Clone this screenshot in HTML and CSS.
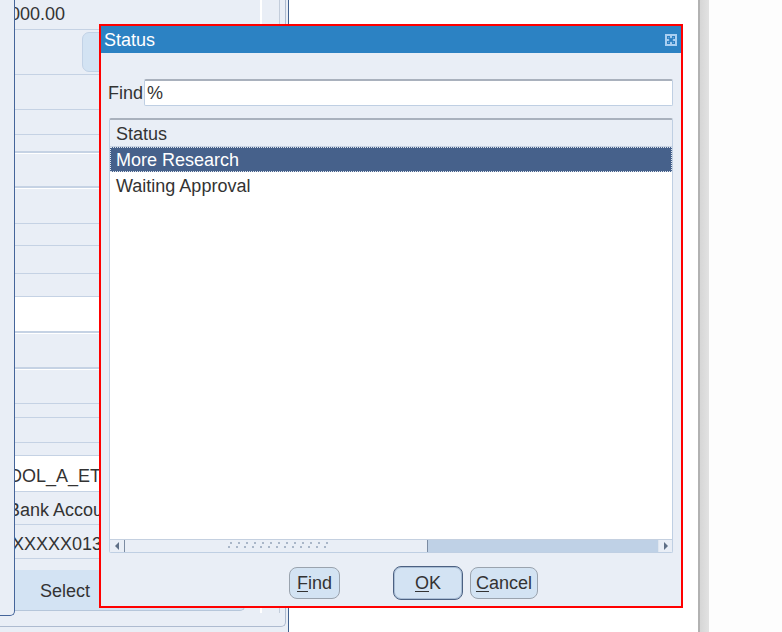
FILE: index.html
```html
<!DOCTYPE html>
<html>
<head>
<meta charset="utf-8">
<link rel="stylesheet" href="styles.css">
</head>
<body>
<div class="page">
  <div class="form">
    <div class="frame">
      <div class="side"></div>
      <div class="panel">
        <div class="row h30"><span class="clip c5">000.00</span></div>
        <div class="row h45"><div class="topbtn"></div></div>
        <div class="row h35"></div>
        <div class="row h25"></div>
        <div class="row h18 dbl"></div>
        <div class="row h35 dbl"></div>
        <div class="row h36"></div>
        <div class="row h22"></div>
        <div class="row h28"></div>
        <div class="row h23"></div>
        <div class="row h36 white dbl"></div>
        <div class="row h36 dbl"></div>
        <div class="row h35"></div>
        <div class="row h14"></div>
        <div class="row h25"></div>
        <div class="row h13"></div>
        <div class="row h36 white"><span class="clip c7 low">OOL_A_ETF</span></div>
        <div class="row h33"><span class="clip c7 low">Bank Account</span></div>
        <div class="row h34"><span class="clip c3 low">XXXXX0131</span></div>
        <div class="selectbtn">Select</div>
      </div>
      <div class="gap"></div>
    </div>
  </div>
  <div class="blank"></div>
  <div class="vbar"></div>
  <div class="rest"></div>
</div>

<div class="dialog">
  <div class="titlebar">
    <span class="title">Status</span>
    <span class="close">
      <svg width="12" height="12" viewBox="0 0 12 12">
        <rect x="0" y="0" width="12" height="12" fill="#a9cff1"/>
        <path d="M3.5 3.5 L8.5 8.5 M8.5 3.5 L3.5 8.5" stroke="#2a7fc2" stroke-width="2"/>
        <path d="M2 2h3v1H3v2H2z M10 2H7v1h2v2h1z M2 10h3V9H3V7H2z M10 10H7V9h2V7h1z" fill="#2a7fc2"/>
      </svg>
    </span>
  </div>
  <div class="dbody">
    <div class="findrow">
      <span class="flabel">Find</span>
      <div class="finput">%</div>
    </div>
    <div class="list">
      <div class="lhead">Status</div>
      <div class="litems">
        <div class="item sel">More Research</div>
        <div class="item">Waiting Approval</div>
      </div>
      <div class="hscroll">
        <div class="sbtn left"><span class="tri-l"></span></div>
        <div class="thumb"><div class="grip"></div></div>
        <div class="track"></div>
        <div class="sbtn right"><span class="tri-r"></span></div>
      </div>
    </div>
    <div class="buttons">
      <div class="btn bfind"><u>F</u>ind</div>
      <div class="btn bok"><u>O</u>K</div>
      <div class="btn bcancel"><u>C</u>ancel</div>
    </div>
  </div>
</div>
</body>
</html>
```

FILE: styles.css
```css
* { box-sizing: border-box; }
html, body { margin: 0; padding: 0; }
body {
  width: 782px;
  height: 632px;
  overflow: hidden;
  position: relative;
  background: #ffffff;
  font-family: "Liberation Sans", Arial, sans-serif;
  font-size: 18px;
  color: #333333;
}
.page { display: flex; height: 632px; }

/* background form */
.form {
  width: 289px;
  flex: none;
  height: 632px;
  background: #e9eef6;
  border-right: 1px solid #3f5f8e;
}
.frame {
  width: 286px;
  height: 627px;
  display: flex;
  border-right: 1px solid #aebbd0;
  border-bottom: 1px solid #aebbd0;
  border-bottom-right-radius: 5px;
}
.side {
  width: 15px;
  height: 616px;
  flex: none;
  border-right: 1px solid #45659a;
  border-bottom: 1px solid #45659a;
  border-bottom-right-radius: 5px;
}
.panel {
  width: 247px;
  flex: none;
  display: flex;
  flex-direction: column;
  border-right: 2px solid #ffffff;
  height: 613px;
  overflow: hidden;
}
.gap {
  width: 18px;
  flex: none;
  border-right: 1px solid #c3cddb;
  height: 613px;
}
.row {
  flex: none;
  display: flex;
  align-items: center;
  overflow: hidden;
  white-space: nowrap;
  border-bottom: 1px solid #c5d2e4;
}
.row.dbl { border-bottom: 2px solid #c5d2e4; box-shadow: 0 1px 0 #ffffff; }
.row.white { background: #ffffff; }
.h13 { height: 13px; } .h14 { height: 14px; } .h18 { height: 18px; }
.h22 { height: 22px; } .h23 { height: 23px; } .h25 { height: 25px; }
.h28 { height: 28px; } .h30 { height: 30px; } .h33 { height: 33px; }
.h34 { height: 34px; } .h35 { height: 35px; } .h36 { height: 36px; }
.h45 { height: 45px; }
.clip { display: block; flex: none; }
.low { padding-top: 5px; }
.c3 { margin-left: -3px; }
.c5 { margin-left: -5px; }
.c7 { margin-left: -7px; }
.topbtn {
  margin-left: 67px;
  width: 170px;
  height: 40px;
  background: #d3e3f3;
  border: 1px solid #c2d2e6;
  border-radius: 7px;
}
.selectbtn {
  margin-top: 11px;
  width: 230px;
  height: 41px;
  flex: none;
  background: #d3e3f3;
  border-bottom: 1px solid #b6c6da;
  border-right: 1px solid #b6c6da;
  border-bottom-right-radius: 5px;
  padding-left: 25px;
  padding-top: 2px;
  line-height: 38px;
}
.blank { width: 409px; flex: none; background: #ffffff; }
.vbar {
  width: 11px;
  flex: none;
  background: linear-gradient(to right, #b2b2b2 0, #b2b2b2 2px, #d6d6d6 2px, #e2e2e2 100%);
}
.rest { flex: 1; background: #fdfdfd; }

/* dialog */
.dialog {
  position: absolute;
  left: 99px;
  top: 24px;
  width: 584px;
  height: 584px;
  border: 2px solid #ff0000;
  background: #e9eef6;
  display: flex;
  flex-direction: column;
}
.titlebar {
  height: 27px;
  flex: none;
  background: #2c82c3;
  display: flex;
  align-items: center;
  justify-content: space-between;
  padding: 0 4px 0 3px;
}
.title { color: #ffffff; font-size: 18px; line-height: 25px; padding-top: 2px; }
.close { display: block; width: 12px; height: 12px; margin-top: 1px; }
.close svg { display: block; }
.dbody {
  flex: 1;
  display: flex;
  flex-direction: column;
  padding: 0 8px 8px 8px;
}
.findrow {
  margin-top: 26px;
  height: 27px;
  display: flex;
  align-items: stretch;
  margin-left: -1px;
}
.flabel { width: 36px; flex: none; height: 27px; line-height: 25px; padding-top: 2px; }
.finput {
  flex: 1;
  height: 27px;
  background: #ffffff;
  border: 1px solid #bfcfe3;
  border-top: 2px solid #a9b1bd;
  border-radius: 2px;
  padding-left: 2px;
  padding-top: 1px;
  line-height: 23px;
}
.list {
  margin-top: 12px;
  height: 435px;
  flex: none;
  display: flex;
  flex-direction: column;
  background: #ffffff;
  border: 1px solid #bfcfe3;
  border-top: 2px solid #a9b1bd;
  border-radius: 2px;
}
.lhead {
  height: 27px;
  flex: none;
  background: #e9eef6;
  border-bottom: 1px solid #c8d4e4;
  padding-left: 6px;
  padding-top: 2px;
  line-height: 24px;
}
.litems { flex: 1; }
.item {
  height: 26px;
  line-height: 24px;
  padding-top: 2px;
  padding-left: 6px;
  white-space: nowrap;
}
.item.sel {
  background: #46618b;
  color: #ffffff;
  border: 1px dotted #dfe5ee;
  padding-left: 5px;
  padding-top: 1px;
  line-height: 22px;
  height: 25px;
}
.hscroll {
  height: 13px;
  flex: none;
  display: flex;
  background: #e9eef6;
  border-top: 1px solid #c4d0e0;
}
.sbtn {
  width: 15px;
  flex: none;
  display: flex;
  align-items: center;
  justify-content: center;
  background: #e9eef6;
}
.sbtn.left { border-right: 1px solid #7b8ba2; border-bottom-left-radius: 4px; }
.sbtn.right { width: 14px; border-left: 1px solid #dfe6ef; border-bottom-right-radius: 4px; }
.tri-l { width: 0; height: 0; border-top: 4px solid transparent; border-bottom: 4px solid transparent; border-right: 4px solid #5f6f86; }
.tri-r { width: 0; height: 0; border-top: 4px solid transparent; border-bottom: 4px solid transparent; border-left: 4px solid #5f6f86; }
.thumb {
  width: 303px;
  flex: none;
  display: flex;
  align-items: center;
  justify-content: center;
  border-right: 1px solid #7b8ba2;
  background: #e9eef6;
}
.grip {
  width: 100px;
  height: 8px;
  margin-left: 4px;
  background-image:
    radial-gradient(circle at 1px 1px, #a9b6c8 1px, transparent 1.2px),
    radial-gradient(circle at 1px 1px, #a9b6c8 1px, transparent 1.2px);
  background-size: 8px 8px, 8px 8px;
  background-position: 2px 0, 0 4px;
  background-repeat: repeat-x;
}
.track { flex: 1; background: #bfd1e6; }
.buttons {
  margin-top: 13px;
  display: flex;
  align-items: center;
  padding-left: 180px;
}
.btn {
  height: 32px;
  line-height: 29px;
  padding-top: 1px;
  text-align: center;
  background: #d3e3f3;
  border: 1px solid #9aa3ae;
  border-radius: 8px;
}
.btn u { text-decoration-thickness: 1px; text-underline-offset: 2px; }
.bfind { width: 51px; }
.bok {
  width: 70px;
  height: 34px;
  line-height: 31px;
  margin-left: 53px;
  border: 1px solid #4c6182;
  box-shadow: inset 0 0 0 1px #a9bdd5;
}
.bcancel { width: 68px; margin-left: 7px; }
```
